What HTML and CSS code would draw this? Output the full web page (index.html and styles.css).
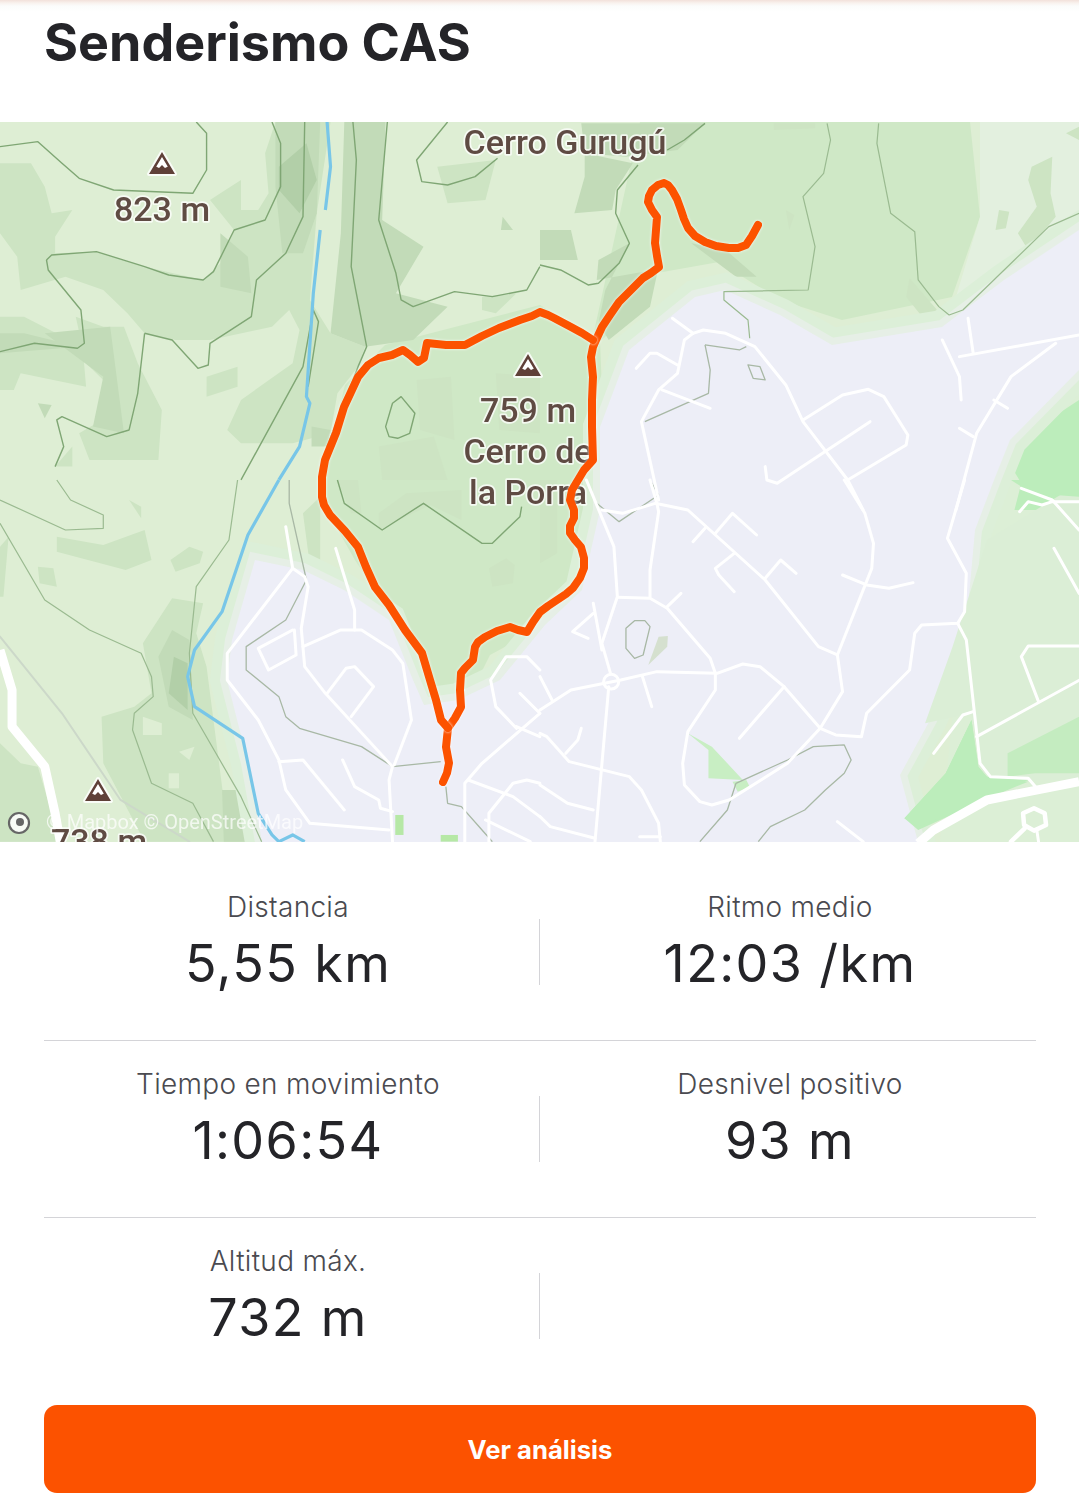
FILE: index.html
```html
<!DOCTYPE html>
<html lang="es">
<head>
<meta charset="utf-8">
<title>Senderismo CAS</title>
<link rel="stylesheet" href="styles.css">
</head>
<body>
<main class="page">
  <div class="topshade"></div>
  <header class="head"><h1 class="title">Senderismo CAS</h1></header>

  <svg class="map" viewBox="0 122 1079 720" xmlns="http://www.w3.org/2000/svg" role="img" aria-label="Mapa">
    <defs>
      <g id="peak">
        <path class="halo-shape" d="M0-11 13 11H-13Z"/>
        <path class="peak-dark" fill-rule="evenodd" d="M0-11 13 11H-13ZM0-6-9 9H9Z"/>
        <path class="peak-dark" d="M-11 11-7 3-3 5 0 2 3 5 7 3 11 11Z"/>
      </g>
    </defs>
    <rect class="base" x="0" y="122" width="1079" height="720"/>

    <!-- pale and forest fills, page coordinates -->
    <path class="forest" d="M712 122H970L980 217 952 297 842 320 780 300 719 262 657 273 605 337 590 350 640 122Z"/>
    <path class="forest" d="M345 385 385 345 540 305 600 340 605 470 590 560 545 625 490 655 465 705 440 715 400 630 355 560 318 495Z"/>
    <path class="pale-r" d="M980 122H1079V240L1004 280 952 310 980 217Z"/>
    <path class="pale-b" d="M940 842 960 640 975 530 1000 440 1079 370V842Z"/>

    <!-- hill shading traced at zoom scale -->
    <g transform="scale(.3443 .3333)">
      <path class="s1" d="M0 490 90 490 130 560 150 640 210 630 160 710 160 760 280 755 420 800 590 840 640 790 680 690 610 600 640 580 700 540 700 630 750 630 780 580 770 460 800 366 960 366 920 640 900 900 960 1000 1060 1040 1040 1100 980 1180 960 1300 850 1330 700 1330 660 1290 700 1200 850 1090 870 990 840 930 790 980 610 1020 510 1020 420 1000 370 940 300 870 190 830 60 870 50 770 0 700Z"/>
      <path class="s1" d="M0 950 70 950 240 1040 250 1160 60 1120 40 1170 0 1170Z"/>
      <path class="s1" d="M300 980 360 980 400 1090 470 1230 460 1380 260 1380 230 1300 330 1240 300 1140 250 1090 220 950Z"/>
      <path class="s1" d="M600 1130 690 1100 690 1160 600 1190Z"/>
      <path class="s1" d="M160 1400 210 1340 210 1400Z"/>
      <path class="s2" d="M0 1000 70 1000 230 1040 0 1060Z"/>
      <path class="s2" d="M1000 366H1120L1110 660 1230 740 1150 880 1300 920 1200 1020 1060 1040 960 1000 990 700Z"/>
      <path class="s2" d="M130 1000 320 980 360 1300 270 1280 300 1130Z"/>
      <path class="s2" d="M640 700 720 770 730 880 640 860Z"/>
      <path class="s2" d="M800 366H930L920 640 880 760 820 760 800 560Z"/>
      <path class="s3" d="M810 500 890 430 920 540 870 640 810 570Z"/>
      <path class="s1" d="M1270 500 1440 480 1410 600 1300 610Z"/>
      <path class="s1" d="M1400 890 1500 880 1440 940 1400 930Z"/>
      <path class="s1" d="M1210 1140 1310 1130 1320 1320 1220 1290Z"/>
      <path class="s1" d="M1440 1120 1568 1130 1568 1300 1450 1290Z"/>
      <path class="s1" d="M1100 1340 1260 1310 1300 1440 1110 1440Z"/>
      <path class="s2" d="M1460 650 1490 690 1455 690Z"/>
      <path class="s2" d="M110 1210 150 1215 130 1255Z"/>
      <path class="s2" d="M905 1280 960 1290 950 1340 905 1340Z"/>
    </g>
    <g transform="translate(540 110) scale(.3438 .3333)">
      <path class="s2" d="M120 40H480L400 120 250 140 130 130Z"/>
      <path class="s2" d="M130 130 270 160 220 240 210 300 100 310 130 200Z"/>
      <path class="s2" d="M0 360H90L110 450 0 450Z"/>
      <path class="s2" d="M260 400 170 450 165 510 330 480 345 470 320 590 200 690 170 640 190 540Z"/>
      <path class="s1" d="M680 40H800V55L680 60Z"/>
      <path class="s2" d="M440 400 540 420 630 500 570 500Z"/>
      <path class="s1" d="M1075 505 1155 600 1150 670 1065 560Z"/>
      <path class="s1" d="M1335 300 1365 305 1355 355 1325 360Z"/>
      <path class="s1" d="M1430 170 1490 140 1485 250 1500 320 1420 420 1390 370 1445 290 1420 210Z"/>
      <path class="s1" d="M715 300 740 315 725 360Z"/>
      <path class="s1" d="M190 920 250 890 250 950 190 975Z"/>
      <path class="s1" d="M1530 70 1568 50V90Z"/>
      <path class="bright" d="M1365 1060 1450 950 1568 870V1200H1380L1400 1120Z"/>
    </g>
    <g transform="translate(0 480) scale(.3443 .3333)">
      <path class="s1" d="M415 490 500 355 590 370 570 460 600 560 650 960 740 1085H420L300 850 295 710 390 680 440 640Z"/>
      <path class="s2" d="M460 530 500 450 550 480 560 720 490 680Z"/>
      <path class="s3" d="M490 640 505 530 545 550 545 690Z"/>
      <path class="s2" d="M645 930H700L740 1085H650Z"/>
      <path class="s1" d="M165 170 300 195 420 150 440 240 365 270 165 215Z"/>
      <path class="s1" d="M110 260 155 265 165 320 115 310Z"/>
      <path class="s1" d="M495 240 550 200 590 215 580 250 510 275Z"/>
      <path class="s1" d="M375 60 410 80 410 115Z"/>
      <path class="s1" d="M0 200 25 170 10 350H0Z"/>
      <path class="s1" d="M0 790 60 850 110 860 175 1085H0Z"/>
      <path class="base" d="M415 710 470 730 470 765 415 765Z"/>
      <path class="base" d="M520 815 565 800 550 840Z"/>
      <path class="base" d="M490 880H520V925H490Z"/>
      <path class="s1" d="M1420 265 1470 235 1495 255 1490 310 1430 320Z"/>
      <path class="s1" d="M980 0H1040L1050 100 1020 100Z"/>
      <path class="s1" d="M1100 100 1180 40 1340 30 1340 120 1250 75 1100 150Z"/>
      <path class="s1" d="M880 100 930 50 930 250 900 255Z"/>
    </g>

    <!-- built-up area -->
    <path class="urban-edge2" d="M262 842 248 763 227 680 232 640 255 560 303 570 344 590 389 620 413 680 424 705 458 700 500 680 545 625 582 590 600 510 600 427 629 350 695 297 725 290 780 315 832 345 942 327 1004 280 1079 230V370L1010 440 994 480 975 530 965 640 930 720 900 775 918 842Z"/>
    <path class="urban-edge1" d="M262 842 248 763 227 680 232 640 255 560 303 570 344 590 389 620 413 680 424 705 458 700 500 680 545 625 582 590 600 510 600 427 629 350 695 297 725 290 780 315 832 345 942 327 1004 280 1079 230V370L1010 440 994 480 975 530 965 640 930 720 900 775 918 842Z"/>
    <path class="urban" d="M262 842 248 763 227 680 232 640 255 560 303 570 344 590 389 620 413 680 424 705 458 700 500 680 545 625 582 590 600 510 600 427 629 350 695 297 725 290 780 315 832 345 942 327 1004 280 1079 230V370L1010 440 994 480 975 530 965 640 930 720 900 775 918 842Z"/>

    <g transform="translate(540 480) scale(.3438 .3333)">
      <path class="bright" d="M1060 1015 1180 880 1255 720 1275 860 1300 890 1420 900 1100 1050Z"/>
      <path class="pale-g" d="M1200 500 1300 180 1568 10V900H1420L1290 880 1255 700 1120 730Z"/>
      <path class="bright2" d="M1360 820 1568 710V880H1440L1360 890Z"/>
      <path class="bright" d="M1255 720 1275 860 1300 890 1420 905 1100 1040 1060 1015 1180 880Z"/>
      <path class="bright" d="M1370 0H1568V50L1430 40Z"/>
      <path class="park" d="M430 760 500 800 590 900 490 895 490 810Z"/>
      <path class="park" d="M560 905 600 900 610 920 575 935Z"/>
      <path class="sage" d="M315 555 345 470 372 468 370 500Z"/>
      <path class="s1" d="M0 250 50 220 50 0H0Z"/>
    </g>
    <g transform="translate(0 480) scale(.3443 .3333)">
      <path class="park2" d="M1148 1005H1172V1065H1148Z"/>
      <path class="park2" d="M1280 1065H1330V1085H1280Z"/>
    </g>

    <!-- contours -->
    <g class="contour" transform="scale(.3443 .3333)">
      <path d="M0 440 110 425 180 490 230 535 330 570 560 580 600 510 600 400 570 366"/>
      <path d="M135 780 150 765 280 755 420 800 490 825 590 840 620 815 680 690 770 660 815 560 815 430 790 366"/>
      <path d="M135 780 140 810 235 930 245 1030 225 1045 100 1030 0 1055"/>
      <path d="M420 1000 500 1020 575 1105 605 1095 610 1030 730 950 745 840 830 760 880 650 885 366"/>
      <path d="M160 1400 185 1340 165 1260 180 1250 310 1310 375 1290 400 1180 420 1000"/>
      <path d="M700 1440 880 1100 910 930 925 965 895 1160"/>
      <path d="M1025 366 1035 480 1020 800 1065 1040 1040 1100 950 1340"/>
      <path d="M1125 366 1100 660 1150 820 1165 900 1200 920 1320 875 1430 890 1530 870 1568 800"/>
      <path d="M1300 366 1210 480 1225 545 1300 555 1380 530 1445 475"/>
      <path d="M1165 1190 1205 1240 1190 1300 1155 1315 1130 1310 1120 1280 1140 1210Z"/>
    </g>
    <g class="contour" transform="translate(540 110) scale(.3438 .3333)">
      <path d="M480 40 420 90 370 120"/>
      <path d="M285 165 225 240 220 310 260 400 230 460 170 520 140 525 60 480 0 465"/>
      <path class="faint" d="M835 40 845 90 825 190 765 260 800 410 780 540 535 545 535 570 605 630 610 685"/>
      <path class="faint" d="M985 40 980 100 1020 310 1090 365 1100 510 1160 590 1190 615 1230 600 1350 480 1480 350 1568 310"/>
      <path class="grey" d="M480 705 580 720 600 710"/>
      <path class="grey" d="M480 705 495 780 490 850 305 935"/>
      <path class="grey" d="M605 765 640 770 655 810 620 805Z"/>
    </g>
    <g class="contour" transform="translate(0 480) scale(.3443 .3333)">
      <path class="faint" d="M165 0 205 60 300 105 300 145 190 150 0 60"/>
      <path class="faint" d="M0 130 130 360 260 450 410 520 440 590 445 650 390 700 385 750 440 910 560 970 620 1085"/>
      <path class="faint" d="M690 0 665 180 570 320 550 520 560 700 700 950 760 1085"/>
      <path d="M980 0 1000 70 1110 150 1230 70 1400 190 1430 190 1510 110 1515 80"/>
      <path class="grey" d="M840 0 840 70 890 300 830 420 715 500 715 570 810 650 830 710 870 745 1050 800 1140 860 1280 845"/>
      <path class="grey" d="M1295 920 1300 970 1340 980 1400 1050 1430 1085"/>
    </g>
    <g class="contour" transform="translate(540 480) scale(.3438 .3333)">
      <path class="grey" d="M320 0 345 45 230 125 165 70"/>
      <path class="grey" d="M570 910 545 990 465 1085"/>
      <path class="grey" d="M570 910 720 840 795 800 885 795 905 840 885 880 830 930 770 990 670 1040 635 1085"/>
      <path class="grey" d="M250 445 275 422 305 422 320 440 300 525 275 535 250 505Z"/>
    </g>

    <!-- river -->
    <g class="river" transform="scale(.3443 .3333)">
      <path d="M950 366 960 500 945 630"/>
      <path d="M930 690 910 880 890 1190 900 1210 870 1340 810 1440"/>
    </g>
    <g class="river" transform="translate(0 480) scale(.3443 .3333)">
      <path d="M810 0 720 165 645 395 565 510 545 590 565 680 705 775 750 1000 790 1065 810 1085 850 1065 885 1085"/>
    </g>

    <!-- roads -->
    <g class="road" transform="translate(540 110) scale(.3438 .3333)">
      <path d="M385 625 445 670"/>
      <path d="M445 670 475 660 540 670 625 710 715 825 765 935 895 1110 940 1200"/>
      <path d="M445 670 420 690 400 790 345 840 295 935 345 1170"/>
      <path d="M280 775 320 730 340 730 400 765"/>
      <path d="M355 840 495 895"/>
      <path d="M765 930 880 855 955 838 1000 860 1070 975 1065 1005 895 1110"/>
      <path d="M960 935 690 1120 660 1110 655 1070"/>
      <path d="M1170 690 1220 800 1225 870"/>
      <path d="M1245 625 1260 730"/>
      <path d="M1220 740 1568 675"/>
      <path d="M1500 700 1370 800 1270 970 1210 1200"/>
      <path d="M1220 955 1260 980"/>
      <path d="M1320 870 1360 895"/>
    </g>
    <g class="road" transform="translate(540 480) scale(.3438 .3333)">
      <path d="M320 0 340 70 345 95 320 270 320 350"/>
      <path d="M135 0 215 200 225 350 180 490 205 580"/>
      <path d="M180 90 240 100 335 70 430 90 655 300 810 500 865 525 880 635 815 745 720 850 550 960 500 975 465 965 420 915 415 850 430 755 510 630 510 580 495 535 370 385 320 355 225 352"/>
      <path d="M370 380 410 340"/>
      <path d="M445 185 480 145"/>
      <path d="M510 160 560 100 630 165"/>
      <path d="M565 220 510 265 520 285 565 335"/>
      <path d="M655 295 700 240 745 280"/>
      <path d="M885 0 945 100 970 190 965 265 865 525"/>
      <path d="M880 285 950 315 1015 325 1085 308"/>
      <path d="M1235 0 1185 175 1240 280 1235 395 1215 430 1110 435 1090 460 1075 570 950 700 935 770 860 765 815 745 710 620 640 560 590 552 515 580 340 575 235 600 90 630 0 690"/>
      <path d="M710 620 580 775"/>
      <circle cx="207" cy="605" r="22"/>
      <path d="M200 620 160 1085"/>
      <path d="M298 590 325 680"/>
      <path d="M155 370 180 510"/>
      <path d="M155 400 95 455 140 475"/>
      <path d="M0 760 20 770 85 845 260 890 295 930 345 1030 350 1085"/>
      <path d="M120 745 110 780 75 820"/>
      <path d="M0 915 80 970 155 990"/>
      <path d="M0 1010 30 1040 160 1075"/>
      <path d="M290 1070H350"/>
      <path d="M1215 430 1240 480 1280 850 1310 890 1420 895 1445 925"/>
      <path d="M1570 600 1270 770"/>
      <path d="M1570 498H1420L1400 530 1450 665"/>
      <path d="M1145 820 1230 705 1260 695"/>
      <path d="M1400 25 1490 60 1568 150"/>
      <path d="M1395 95 1420 65 1460 75 1490 65H1568"/>
      <path d="M1495 205 1568 340"/>
      <path d="M865 1025 940 1085"/>
      <path d="M0 590 35 660"/>
      <path class="wide" d="M1100 1090 1145 1050 1300 960 1568 905"/>
      <path class="mid" d="M1437 985 1468 1000 1472 1035 1437 1052 1408 1035 1405 1000Z"/>
      <path class="mid" d="M1410 1045 1370 1085"/>
      <path d="M1445 1050 1450 1085"/>
    </g>
    <g class="road" transform="translate(0 480) scale(.3443 .3333)">
      <path d="M830 140 850 265 885 290 895 320 875 445 885 560 945 640 1140 860 1130 900 1140 1085"/>
      <path d="M850 265 660 520 660 600 750 720 810 840 830 930 900 1030 1130 1050"/>
      <path d="M850 450 750 505 780 570 860 525 855 450"/>
      <path d="M880 500 990 450 1050 450 1140 510 1170 550 1195 720 1145 855"/>
      <path d="M975 205 1030 390 1030 450"/>
      <path d="M1020 710 1085 620 1030 560 1005 565 950 640"/>
      <path d="M810 845 880 840 1000 990"/>
      <path d="M995 840 1030 920 1100 960 1105 985 1140 995"/>
      <path d="M1350 1085V910L1400 850 1568 700"/>
      <path d="M1500 740 1568 770"/>
      <path d="M1510 640 1568 700"/>
      <path d="M1360 900 1490 950 1568 1010"/>
      <path d="M1420 1085V1000L1490 910 1530 900 1568 910"/>
      <path d="M1410 1020 1540 1085"/>
      <path d="M1500 745 1440 680 1425 600 1470 530 1530 530 1568 570"/>
      <path class="pale-line" d="M0 470 180 700 350 960 550 1085"/>
      <path class="wide" d="M0 510 35 630 35 740 130 860 160 1000 175 1085"/>
    </g>

    <!-- labels under the route -->
    <g class="labels">
      <use href="#peak" x="162" y="163"/>
      <use href="#peak" x="528" y="365"/>
      <use href="#peak" x="98" y="790"/>
      <text x="162" y="221">823 m</text>
      <text x="565" y="154">Cerro Gurugú</text>
      <text x="528" y="422">759 m</text>
      <text x="528" y="463">Cerro de</text>
      <text x="528" y="504">la Porra</text>
      <text x="99" y="853">738 m</text>
    </g>

    <!-- route -->
    <g class="route">
      <path d="M758 225 752 236 746 245 738 248 729 248 716 246 705 242 695 236 688 228 684 219 681 210 677 199 672 190 668 185 664 183 658 185 652 190 649 196 648 202 652 210 657 217 656 230 655 243 657 256 659 267 651 273 643 278 631 290 619 302 610 315 602 327 596 340 593 347 591 357 593 377 592 400 592 427 593 460 584 470 578 480 572 490 570 500 574 510 574 518 570 526 570 533 575 540 581 547 584 558 584 568 580 578 573 588 566 594 557 600 548 606 540 612 533 622 527 632 518 630 510 627 497 631 485 637 478 642 475 647 473 660 465 668 461 673 460 690 461 707 455 718 448 728 446 747 449 763 447 773 443 782"/>
      <path d="M448 728 441 720 436 700 430 680 422 653 405 630 389 605 375 587 366 567 358 547 345 531 330 515 324 505 322 497 322 477 325 460 336 433 344 407 358 377 368 365 379 358 392 355 403 350 410 355 418 362 424 358 427 343 446 345 465 345 482 336 499 328 520 320 532 316 540 312 548 315 554 318 571 327 582 333 593 340"/>
    </g>

    <!-- attribution -->
    <circle class="mb-ring" cx="19" cy="823" r="10"/>
    <circle class="mb-dot" cx="20" cy="822" r="4"/>
    <text class="attrib" x="46" y="829">© Mapbox © OpenStreetMap</text>
  </svg>

  <section class="stats">
    <div class="row">
      <div class="stat"><div class="label">Distancia</div><div class="value">5,55 km</div></div>
      <div class="sep"></div>
      <div class="stat"><div class="label">Ritmo medio</div><div class="value">12:03 /km</div></div>
    </div>
    <div class="row">
      <div class="stat"><div class="label">Tiempo en movimiento</div><div class="value">1:06:54</div></div>
      <div class="sep"></div>
      <div class="stat"><div class="label">Desnivel positivo</div><div class="value">93 m</div></div>
    </div>
    <div class="row last">
      <div class="stat"><div class="label">Altitud máx.</div><div class="value">732 m</div></div>
      <div class="sep"></div>
      <div class="stat"></div>
    </div>
  </section>

  <div class="action"><button class="cta" type="button">Ver análisis</button></div>
</main>
</body>
</html>
```
FILE: styles.css
```css
* { box-sizing: border-box; }
html, body { margin: 0; padding: 0; background: #fff; }
body { font-family: "Inter", "Liberation Sans", sans-serif; color: #242428; }
.page { width: 1079px; height: 1496px; overflow: hidden; display: flex; flex-direction: column; }

.topshade { height: 12px; flex: none; background: linear-gradient(#f2e1da 0, #f9f2ee 3px, #fbfcfb 6px, #fff 12px); }
.head { height: 110px; flex: none; padding: 1px 44px 0; }
.title { margin: 0; font-family: "Inter", sans-serif; font-weight: 700; font-size: 52px; line-height: 60px; color: #242428; letter-spacing: 0; }

.map { display: block; width: 1079px; height: 720px; flex: none; filter: blur(.7px); }
.base { fill: #deeed4; }
.forest { fill: #cfe8c6; }
.pale-r { fill: #e3f0df; }
.pale-b { fill: #dcefd6; }
.pale-g { fill: #dbeed6; }
.s1 { fill: #cde4c3; }
.s2 { fill: #c2dbb8; }
.s3 { fill: #b2cfa8; }
.bright { fill: #bcedbb; }
.bright2 { fill: #c4ecc0; }
.park { fill: #c8eec3; }
.park2 { fill: #b6e8a6; }
.sage { fill: #d5e0cf; }
.urban { fill: #edeef7; }
.urban-edge1 { fill: #e6efe6; stroke: #e6efe6; stroke-width: 14; stroke-linejoin: miter; }
.urban-edge2 { fill: #dcefd8; stroke: #dcefd8; stroke-width: 34; stroke-linejoin: miter; }

.contour path { fill: none; stroke: #7fa674; stroke-width: 1.4; vector-effect: non-scaling-stroke; stroke-linejoin: round; }
.contour .faint { stroke: #9aba90; stroke-width: 1.2; }
.contour .grey { stroke: #a8b8a5; stroke-width: 1.3; }
.river path { fill: none; stroke: #78c6e8; stroke-width: 3.2; vector-effect: non-scaling-stroke; stroke-linejoin: round; }
.road path, .road circle { fill: none; stroke: #fff; stroke-width: 3; vector-effect: non-scaling-stroke; stroke-linejoin: round; stroke-linecap: round; }
.road .wide { stroke-width: 9; stroke-linecap: butt; }
.road .mid { stroke-width: 4.5; }
.road .pale-line { stroke: #ccd8c9; stroke-width: 2; }

.labels text { font-family: "Roboto", sans-serif; font-weight: 500; font-size: 34px; text-anchor: middle; fill: #5f4b43; stroke: rgba(255,255,255,.75); stroke-width: 3.5px; paint-order: stroke; stroke-linejoin: round; }
.halo-shape { fill: #fff; stroke: rgba(255,255,255,.8); stroke-width: 4px; stroke-linejoin: round; }
.peak-dark { fill: #5f4038; }

.route path { fill: none; stroke: #fc5200; stroke-width: 8; stroke-linecap: round; stroke-linejoin: round; filter: drop-shadow(0 0 1.5px rgba(255,255,255,.9)); }

.mb-ring { fill: rgba(255,255,255,.85); stroke: #666; stroke-width: 2.2; }
.mb-dot { fill: #666; }
.attrib { font-family: "Roboto", sans-serif; font-size: 20px; fill: rgba(255,255,255,.72); }

.stats { padding: 22px 43px 0 44px; flex: none; }
.row { display: grid; grid-template-columns: 488px 12px 1fr; height: 177px; padding-top: 23px; border-bottom: 1px solid #d4d4d8; }
.row.last { border-bottom: 0; }
.stat { text-align: center; }
.label { font-size: 28px; line-height: 40px; font-weight: 300; color: #4a4a50; letter-spacing: .3px; }
.value { font-size: 52px; line-height: 66px; margin-top: 4px; font-weight: 400; color: #242428; letter-spacing: 1.4px; }
.sep { width: 1px; height: 66px; margin: 32px 0 0 7px; background: #d4d4d8; }

.action { padding: 10px 43px 0 44px; flex: none; }
.cta { display: block; width: 100%; height: 88px; border: 0; border-radius: 13px; background: #fc5200; color: #fff; font-family: "Inter", sans-serif; font-weight: 700; font-size: 25.7px; }
```
